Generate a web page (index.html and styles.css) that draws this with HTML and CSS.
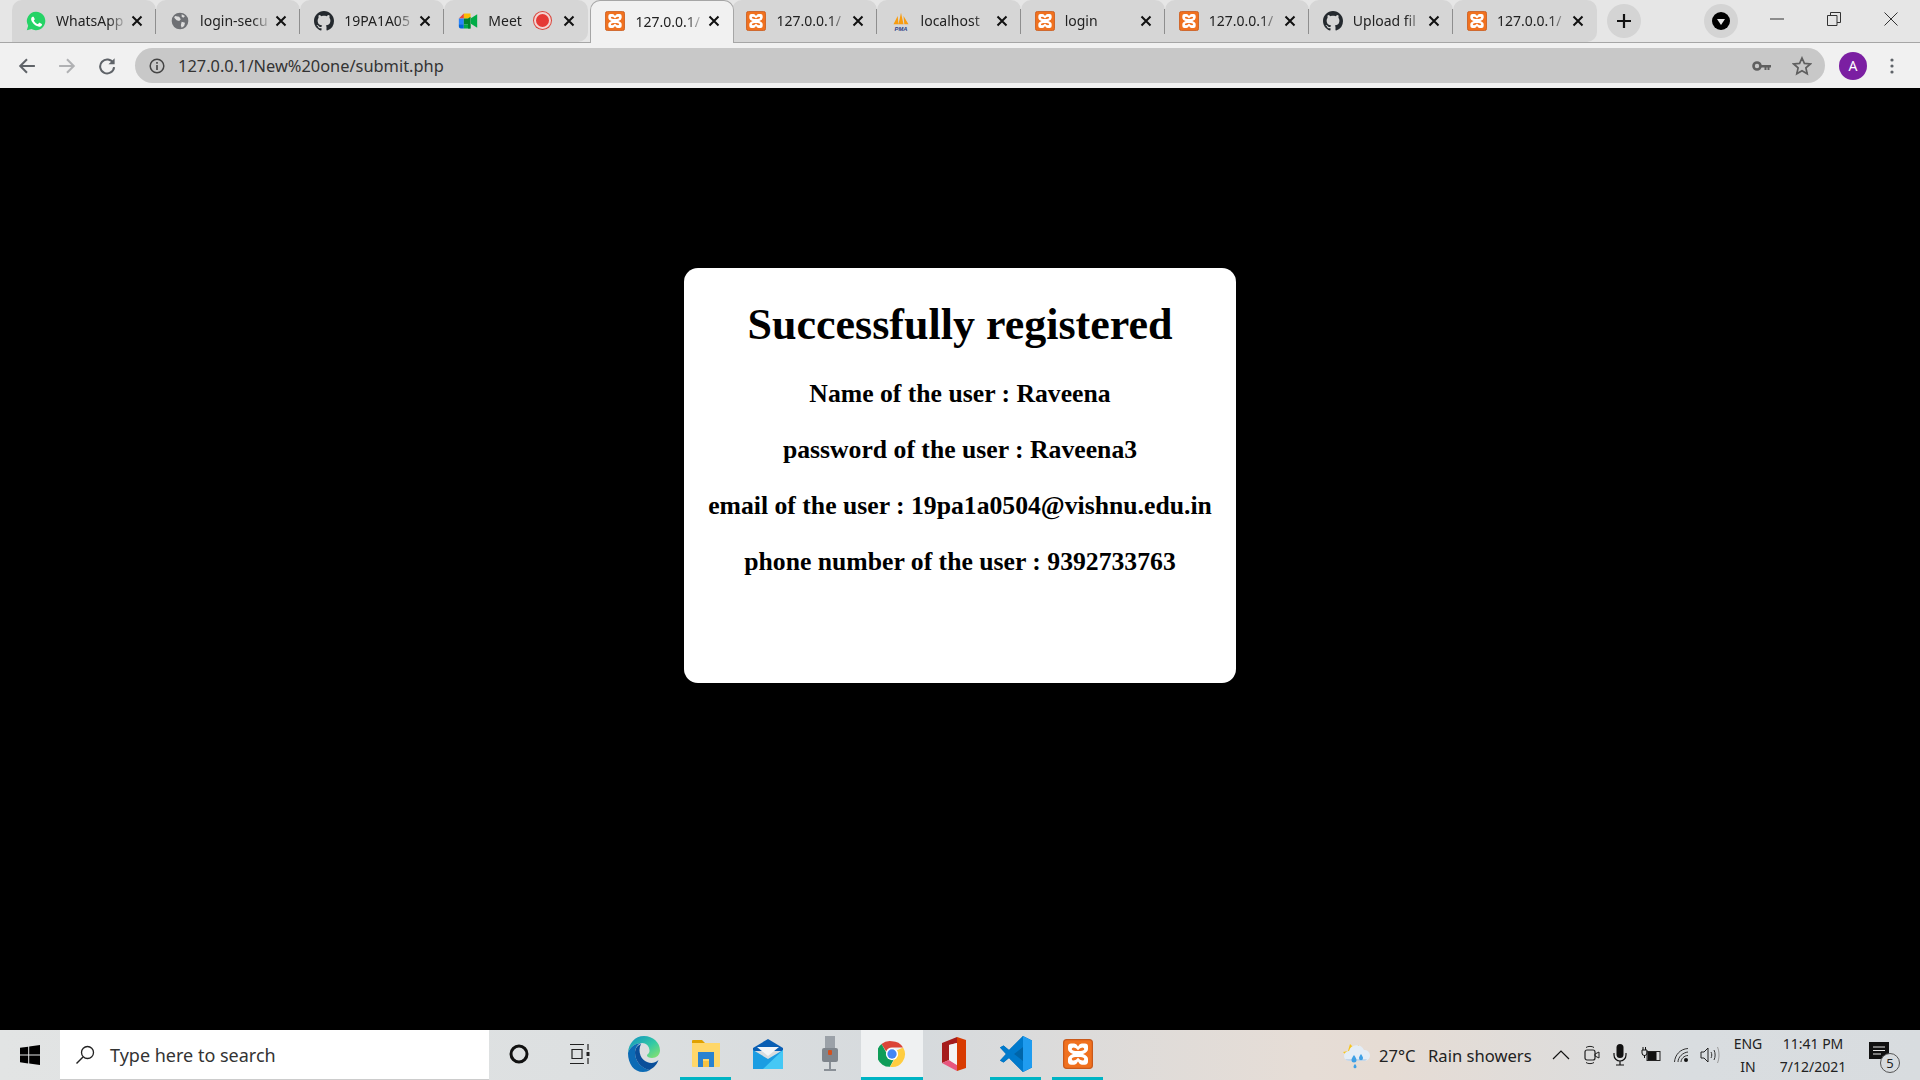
FILE: index.html
```html
<!DOCTYPE html>
<html lang="en">
<head>
<meta charset="utf-8">
<title>127.0.0.1/New%20one/submit.php</title>
<link rel="stylesheet" href="styles.css">
</head>
<body>
<svg class="defs" width="0" height="0" aria-hidden="true">
  <defs>
    <symbol id="xampp" viewBox="0 0 24 24">
      <rect x="0.5" y="0.5" width="23" height="23" rx="2.500" fill="#f0711f"/>
      <rect x="0.5" y="0.5" width="23" height="23" rx="2.500" fill="none" stroke="#c9591a"/>
      <path fill="#fff" fill-rule="evenodd" d="M4 6Q4 3.500 6.500 3.500H9Q10.800 3.500 12 6 13.200 3.500 15 3.500H17.500Q20 3.500 20 6V8Q20 10.500 16 12 20 13.500 20 16V18Q20 20.500 17.500 20.500H15Q13.200 20.500 12 18 10.800 20.500 9 20.500H6.500Q4 20.500 4 18V16Q4 13.500 8 12 4 10.500 4 8zM8.500 6.800Q7 6.800 7 8 7 9.200 10 9.600H14Q17 9.200 17 8 17 6.800 15.500 6.800 13.500 7 12 9 10.500 7 8.500 6.800zM10 14.400Q7 14.800 7 16 7 17.200 8.500 17.200 10.500 17 12 15 13.500 17 15.500 17.200 17 17.200 17 16 17 14.800 14 14.400z"/>
    </symbol>
    <symbol id="github" viewBox="0 0 16 16">
      <path fill="#24292e" d="M8 0C3.580 0 0 3.580 0 8c0 3.540 2.290 6.530 5.470 7.590.4.070.55-.17.55-.38 0-.19-.01-.82-.01-1.490-2.010.37-2.530-.49-2.690-.94-.09-.23-.48-.94-.82-1.130-.28-.15-.68-.52-.01-.53.63-.01 1.080.58 1.230.82.720 1.210 1.870.87 2.330.66.070-.52.280-.87.510-1.070-1.780-.2-3.640-.89-3.640-3.950 0-.87.310-1.590.820-2.150-.08-.2-.36-1.020.080-2.120 0 0 .67-.21 2.200.82.640-.18 1.320-.27 2-.27s1.360.09 2 .27c1.530-1.040 2.200-.82 2.200-.82.440 1.100.160 1.920.080 2.120.51.560.820 1.270.820 2.150 0 3.070-1.870 3.750-3.650 3.950.290.250.540.730.540 1.480 0 1.070-.01 1.930-.01 2.200 0 .21.150.46.550.38A8.010 8.010 0 0 0 16 8c0-4.420-3.580-8-8-8z"/>
    </symbol>
    <symbol id="close" viewBox="0 0 12 12">
      <path d="M1.500 1.500l9 9M10.500 1.500l-9 9" stroke="#111" stroke-width="2" fill="none"/>
    </symbol>
  </defs>
</svg>

<header class="chrome">
  <div class="tabstrip">
    <div class="tab">
      <svg class="fav" viewBox="0 0 24 24"><path fill="#25d366" d="M12 1a11 11 0 0 0-9.400 16.600L1 23l5.600-1.500A11 11 0 1 0 12 1z"/><path fill="#fff" d="M8.300 6.500c-.3 0-.8.100-1.200.6-.5.500-1.400 1.400-1.400 3.300s1.400 3.800 1.600 4c.2.300 2.700 4.300 6.700 5.800 3.300 1.300 4 .9 4.700.9s2.300-.9 2.600-1.900c.3-.9.300-1.700.2-1.900-.1-.2-.4-.3-.8-.5l-2.700-1.300c-.4-.1-.6-.2-.9.200l-1.200 1.500c-.2.300-.5.300-.8.100-.4-.2-1.700-.6-3.200-2-1.200-1-2-2.300-2.200-2.700-.2-.4 0-.6.200-.8l.6-.7c.2-.2.300-.4.400-.6.100-.3.100-.5 0-.7L9.700 7.200c-.3-.7-.6-.7-.9-.7z" transform="translate(1.500 1.500) scale(.82)"/></svg>
      <span class="title">WhatsApp</span>
      <svg class="close"><use href="#close"/></svg>
    </div>
    <div class="tab">
      <svg class="fav" viewBox="0 0 24 24"><circle cx="12" cy="12" r="10" fill="#6e7074"/><path fill="#dcdcdc" d="M6 6l5 1 2 3-2 2-3-1-3-3zM14 13l4 1-1 4-3 2-1-3zM14 4l4 2-2 2-2-1z"/></svg>
      <span class="title">login-secu</span>
      <svg class="close"><use href="#close"/></svg>
    </div>
    <div class="tab">
      <svg class="fav"><use href="#github"/></svg>
      <span class="title">19PA1A05</span>
      <svg class="close"><use href="#close"/></svg>
    </div>
    <div class="tab tab-before-active">
      <svg class="fav" viewBox="0 0 24 24"><path fill="#fbbc04" d="M7 3h8v6H7z"/><path fill="#ea4335" d="M7 3v6H1z"/><path fill="#2684fc" d="M1 9h6v7H1z"/><path fill="#0066da" d="M1 16h6v5H3.500A2.500 2.500 0 0 1 1 18.500z"/><path fill="#00ac47" d="M7 16h8v5H7z"/><path fill="#00832d" d="M15 7v14l-3 0V16H7V9h5l3-2z"/><path fill="#00ac47" d="M15 9l8-5v16l-8-5z"/></svg>
      <span class="title title-short">Meet</span>
      <span class="rec"></span>
      <svg class="close"><use href="#close"/></svg>
    </div>
    <div class="tab active">
      <svg class="fav"><use href="#xampp"/></svg>
      <span class="title">127.0.0.1/</span>
      <svg class="close"><use href="#close"/></svg>
    </div>
    <div class="tab">
      <svg class="fav"><use href="#xampp"/></svg>
      <span class="title">127.0.0.1/</span>
      <svg class="close"><use href="#close"/></svg>
    </div>
    <div class="tab">
      <svg class="fav" viewBox="0 0 24 24"><path fill="#f89c0e" d="M3 16L8 6l1 10zM9 16l3-14 3 14zM15 6l6 10h-5z"/><text x="12" y="23.500" class="pma">PMA</text></svg>
      <span class="title">localhost</span>
      <svg class="close"><use href="#close"/></svg>
    </div>
    <div class="tab">
      <svg class="fav"><use href="#xampp"/></svg>
      <span class="title">login</span>
      <svg class="close"><use href="#close"/></svg>
    </div>
    <div class="tab">
      <svg class="fav"><use href="#xampp"/></svg>
      <span class="title">127.0.0.1/</span>
      <svg class="close"><use href="#close"/></svg>
    </div>
    <div class="tab">
      <svg class="fav"><use href="#github"/></svg>
      <span class="title">Upload fil</span>
      <svg class="close"><use href="#close"/></svg>
    </div>
    <div class="tab">
      <svg class="fav"><use href="#xampp"/></svg>
      <span class="title">127.0.0.1/</span>
      <svg class="close"><use href="#close"/></svg>
    </div>
    <button class="newtab" aria-label="New tab">
      <svg width="16" height="16" viewBox="0 0 16 16"><path d="M8 1v14M1 8h14" stroke="#111" stroke-width="2.200"/></svg>
    </button>
    <div class="strip-space"></div>
    <button class="tabsearch" aria-label="Search tabs">
      <svg width="18" height="18" viewBox="0 0 18 18"><circle cx="9" cy="9" r="9" fill="#000"/><path d="M5 7h8l-4 6z" fill="#e6e6e6"/></svg>
    </button>
    <div class="winctl">
      <svg width="14" height="14" viewBox="0 0 14 14"><path d="M0 7h14" stroke="#333"/></svg>
    </div>
    <div class="winctl">
      <svg width="14" height="14" viewBox="0 0 14 14"><path d="M.5 3.500h9.500v10H.5zM3.500 3.500V.5h10v10H10" fill="none" stroke="#333"/></svg>
    </div>
    <div class="winctl">
      <svg width="14" height="14" viewBox="0 0 14 14"><path d="M.5.5l13 13M13.500.5l-13 13" stroke="#333"/></svg>
    </div>
  </div>

  <div class="toolbar">
    <svg class="nav" viewBox="0 0 16 16"><path d="M15 8H2M8 2L2 8l6 6" fill="none" stroke="#5f6368" stroke-width="1.800"/></svg>
    <svg class="nav" viewBox="0 0 16 16"><path d="M1 8h13M8 2l6 6-6 6" fill="none" stroke="#b0b1b3" stroke-width="1.800"/></svg>
    <svg class="nav" viewBox="0 0 16 16"><path d="M13.600 5.500A6.200 6.200 0 1 0 14.300 9" fill="none" stroke="#5f6368" stroke-width="1.800"/><path d="M14.800 1v5.500H9.300z" fill="#5f6368"/></svg>
    <div class="omnibox">
      <svg class="info" viewBox="0 0 16 16"><circle cx="8" cy="8" r="6.800" fill="none" stroke="#444" stroke-width="1.500"/><path d="M8 7v5M8 4v1.800" stroke="#444" stroke-width="1.600"/></svg>
      <span class="url">127.0.0.1/New%20one/submit.php</span>
      <svg class="key" viewBox="0 0 20 12"><circle cx="5" cy="6" r="3.500" fill="none" stroke="#5f5f5f" stroke-width="2.600"/><path d="M8 5h11v2.500h-1.500V10h-2V7.500h-1V10h-2V7.500H8z" fill="#5f5f5f"/></svg>
      <svg class="star" viewBox="0 0 20 20"><path d="M10 2l2.400 5.400 5.900.6-4.400 3.900 1.300 5.800L10 14.700l-5.200 3 1.300-5.800L1.700 8l5.900-.6z" fill="none" stroke="#5f5f5f" stroke-width="1.700"/></svg>
    </div>
    <div class="avatar">A</div>
    <svg class="dots" viewBox="0 0 4 16"><circle cx="2" cy="2" r="1.600" fill="#5f6368"/><circle cx="2" cy="8" r="1.600" fill="#5f6368"/><circle cx="2" cy="14" r="1.600" fill="#5f6368"/></svg>
  </div>
</header>

<main class="page">
  <section class="card">
    <h1 class="card-title">Successfully registered</h1>
    <h2 class="card-line">Name of the user : Raveena</h2>
    <h2 class="card-line">password of the user : Raveena3</h2>
    <h2 class="card-line">email of the user : 19pa1a0504@vishnu.edu.in</h2>
    <h2 class="card-line">phone number of the user : 9392733763</h2>
  </section>
</main>

<footer class="taskbar">
  <div class="start">
    <svg width="20" height="20" viewBox="0 0 20 20"><path fill="#000" d="M0 2.800l8.200-1.100v7.900H0zM9.200 1.500L20 0v9.600H9.200zM0 10.500h8.200v7.900L0 17.200zM9.200 10.500H20V20L9.200 18.500z"/></svg>
  </div>
  <div class="search">
    <svg width="20" height="20" viewBox="0 0 20 20"><circle cx="12.500" cy="7.500" r="6" fill="none" stroke="#222" stroke-width="1.300"/><path d="M8 12l-6.500 6.500" stroke="#222" stroke-width="1.500"/></svg>
    <span>Type here to search</span>
  </div>
  <div class="tb-slot cortana">
    <svg width="20" height="20" viewBox="0 0 20 20"><circle cx="10" cy="10" r="8" fill="none" stroke="#111" stroke-width="3"/></svg>
  </div>
  <div class="tb-slot taskview">
    <svg width="22" height="20" viewBox="0 0 22 20"><path d="M1 .5h14M1 19.500h14M3 5.500h10v9H3zM19 0v6M19 14v6" fill="none" stroke="#222" stroke-width="1.200"/><rect x="17.500" y="8" width="3" height="4" fill="#222"/></svg>
  </div>
  <div class="tb-slot app">
    <svg width="32" height="36" viewBox="0 0 32 36"><defs><linearGradient id="edgeA" x1="0" y1="0" x2="1" y2="1"><stop offset="0" stop-color="#0f8fc4"/><stop offset=".55" stop-color="#33c9a5"/><stop offset="1" stop-color="#8fe36a"/></linearGradient></defs><path fill="url(#edgeA)" d="M16 0c9 0 16 6.500 16 14.500 0 4.500-3.500 7.500-8 7.500-3 0-5-1-5-2.500 0-1.500 2.500-1.500 2.500-5C21.500 10 18 7 14 7 7.500 7 1.500 11 0 17 .5 7.500 7 0 16 0z"/><path fill="#0c6bb5" d="M0 17C1.500 11 7.500 7 14 7c-4.500 1-7 5-7 10 0 8 7 16 15 17-2 1-4 2-7 2C6 36 0 28 0 17z"/><path fill="#0a4f9a" d="M7 17c0-5 3-8 6-9-1 2-1.500 4-1.500 6 0 8 6 13 12 13 2 0 5-1 7-3-2 6-7 9-9 10C14 33 7 25 7 17z"/></svg>
  </div>
  <div class="tb-slot app running">
    <svg width="28" height="28" viewBox="0 0 28 28"><path fill="#e0a100" d="M0 1a1 1 0 0 1 1-1h9l3 3H0z"/><path fill="#ffd76a" d="M0 3h28v23a1 1 0 0 1-1 1H1a1 1 0 0 1-1-1z"/><path fill="#2a83d0" fill-rule="evenodd" d="M6 12h16v15h-5v-8h-6v8H6z"/><rect x="11" y="21" width="6" height="6" fill="#f5c242"/></svg>
  </div>
  <div class="tb-slot app">
    <svg width="30" height="30" viewBox="0 0 30 30"><path fill="#0a5fb4" d="M15 0l15 9v3H0V9z"/><path fill="#f4f6f8" d="M4 8h22l-11 9z"/><path fill="#1b9de2" d="M0 11l15 9 15-9v19H0z"/><path fill="#45c8f5" d="M30 11v19H10z"/></svg>
  </div>
  <div class="tb-slot app">
    <svg width="16" height="36" viewBox="0 0 16 36"><rect x="3" y="0" width="10" height="12" fill="#9ba1a8"/><rect x="0" y="12" width="16" height="14" rx="2" fill="#7f858c"/><rect x="6" y="14" width="4" height="5" rx="1" fill="#d2501e"/><rect x="7" y="26" width="2" height="7" fill="#8a9097"/><rect x="2" y="33" width="12" height="2" fill="#8a9097"/></svg>
  </div>
  <div class="tb-slot app running current">
    <svg width="28" height="28" viewBox="0 0 48 48"><path fill="#db4437" d="M24 2a22 22 0 0 1 19 11H24a11 11 0 0 0-10 6.500L6 7a22 22 0 0 1 18-5z"/><path fill="#0f9d58" d="M6 7l9.500 17a10 10 0 0 0 12 8.700L20.500 46A22 22 0 0 1 6 7z"/><path fill="#ffcd40" d="M43 13a22 22 0 0 1-22.500 33l8-13.400A10 10 0 0 0 32 18z"/><circle cx="24" cy="24" r="10.500" fill="#fff"/><circle cx="24" cy="24" r="8" fill="#4285f4"/></svg>
  </div>
  <div class="tb-slot app">
    <svg width="24" height="34" viewBox="0 0 24 34"><path fill="#a61c1c" d="M0 6L15 0v6L7 8v15l-7 3z"/><path fill="#d83b01" d="M15 0l9 3v28l-9 3z"/><path fill="#e8567e" d="M0 26l7-3 8 5v6z"/><path fill="#f4f4f4" d="M7 8l8-2v22l-8-5z"/></svg>
  </div>
  <div class="tb-slot app running">
    <svg width="32" height="36" viewBox="0 0 32 36"><path fill="#0065a9" d="M23 0l9 4.500v27L23 36 9 22 3.500 26.500 0 24.500 6 18 0 11.500l3.500-2L9 14z"/><path fill="#007acc" d="M23 0v11l-9 7 9 7v11L9 22 3.500 26.500 0 24.500 6 18 0 11.500l3.500-2L9 14z"/><path fill="#1f9cf0" d="M23 0l9 4.500v27L23 36z"/></svg>
  </div>
  <div class="tb-slot app running">
    <svg width="30" height="30"><use href="#xampp"/></svg>
  </div>

  <div class="tray">
    <svg class="weather" width="28" height="28" viewBox="0 0 28 28"><path fill="#f7c51a" d="M1 11l5-1 2-7 4 4 5-3-1 8-9 5z"/><path fill="#e4edf6" d="M7 20a5 5 0 0 1 0-10 8 8 0 0 1 15-1 5.500 5.500 0 0 1 1 11z"/><path fill="#c4d6e8" d="M7 20a5 5 0 0 1-4-2h22a5.500 5.500 0 0 1-2 2z"/><path fill="#3ea0e6" d="M12 14c1.600 2.400 2.500 3.700 2.500 5a2.500 2.500 0 0 1-5 0c0-1.300.9-2.600 2.500-5zM19 13c1.300 2 2 3 2 4.200a2 2 0 0 1-4 0c0-1.200.7-2.200 2-4.200zM13 23c1 1.300 1.500 2 1.500 2.800a1.500 1.500 0 0 1-3 0c0-.8.500-1.500 1.500-2.800z"/></svg>
    <span class="temp">27°C</span>
    <span class="cond">Rain showers</span>
    <svg class="chev" width="18" height="10" viewBox="0 0 18 10"><path d="M1 9l8-8 8 8" fill="none" stroke="#111" stroke-width="1.200"/></svg>
    <svg class="ti ti-meet" width="16" height="20" viewBox="0 0 16 20"><rect x="1" y="5" width="10" height="10" rx="2" fill="none" stroke="#222" stroke-width="1.200"/><path d="M11 9l4-2v6l-4-2zM2 2.500C4 1 8 1 10 2.500M2 17.500c2 1.500 6 1.500 8 0" fill="none" stroke="#222"/></svg>
    <svg class="ti ti-mic" width="14" height="22" viewBox="0 0 14 22"><rect x="3.500" y="0" width="7" height="14" rx="3.500" fill="#111"/><path d="M1 9v2a6 6 0 0 0 12 0V9M7 17v4M3 21h8" fill="none" stroke="#111" stroke-width="1.200"/></svg>
    <svg class="ti ti-batt" width="20" height="16" viewBox="0 0 20 16"><path d="M2 0v3M4.500 0v3M1 3h5v3a2.500 2.500 0 0 1-5 0zM3.500 8v3" fill="none" stroke="#111"/><rect x="6" y="4.500" width="13" height="9" fill="none" stroke="#222"/><rect x="6.500" y="5" width="9" height="8" fill="#111"/></svg>
    <svg class="ti ti-wifi" width="16" height="16" viewBox="0 0 16 16"><path d="M1.500 15C2 8 7 2 15 1.500M5 15C5 10 10 5.500 15 5M8 15c0-3 3-6.500 7-6.500" fill="none" stroke="#333"/><circle cx="13" cy="13" r="2" fill="#111"/></svg>
    <svg class="ti ti-vol" width="20" height="20" viewBox="0 0 20 20"><path d="M1 7h3l4-4v14l-4-4H1z" fill="none" stroke="#222"/><path d="M11 7c1 2 1 4 0 6M14 5c1.500 3 1.500 7 0 10" fill="none" stroke="#333"/><path d="M17.500 2c2 5 2 11 0 16" fill="none" stroke="#999"/></svg>
    <div class="lang"><span>ENG</span><span>IN</span></div>
    <div class="clock"><span>11:41 PM</span><span>7/12/2021</span></div>
    <div class="notif">
      <svg width="20" height="20" viewBox="0 0 20 20"><path d="M0 0h20v17H0z" fill="#111"/><path d="M4 5h12M4 8.500h12M4 12h8" stroke="#e5e5e5" stroke-width="1.200"/></svg>
      <span class="badge">5</span>
    </div>
  </div>
</footer>
</body>
</html>
```

FILE: styles.css
```css
* { box-sizing: border-box; }
html, body { margin: 0; height: 100%; }
body {
  display: flex;
  flex-direction: column;
  height: 100vh;
  overflow: hidden;
  background: #000;
  font-family: "Noto Sans", "Open Sans", sans-serif;
}
.defs { display: block; height: 0; }

.chrome { height: 88px; flex: none; display: flex; flex-direction: column; }

.tabstrip {
  height: 43px;
  flex: none;
  display: flex;
  align-items: stretch;
  padding-left: 12px;
  background: #e6e6e6;
  border-bottom: 1px solid #a6a6a6;
}
.tab {
  width: 144.1px;
  flex: none;
  display: flex;
  align-items: center;
  padding: 0 13px 1px 14px;
  background: #d6d6d6;
  border-radius: 10px 10px 0 0;
  position: relative;
}
.tab::after {
  content: "";
  position: absolute;
  right: 0;
  top: 9px;
  height: 25px;
  width: 1px;
  background: #8e8e8e;
}
.tab:nth-child(4)::after, .tab:nth-child(5)::after, .tab:nth-child(11)::after { display: none; }
.tab-before-active, .tab:nth-child(11) { border-bottom-right-radius: 10px; }
.tab.active {
  background: #f1f1f1;
  border: 1px solid #a6a6a6;
  border-bottom: 0;
  margin-bottom: -1px;
  margin-left: 2px;
  margin-right: -2px;
  padding-bottom: 2px;
  z-index: 2;
}
.fav { width: 20px; height: 20px; flex: none; }
.pma { font: italic bold 7px "Liberation Sans", sans-serif; fill: #2c3f86; text-anchor: middle; }
.title {
  flex: 1;
  min-width: 0;
  margin-left: 10px;
  font-size: 14px;
  color: #222;
  white-space: nowrap;
  -webkit-mask-image: linear-gradient(to right, #000 78%, rgba(0,0,0,.25) 100%);
  mask-image: linear-gradient(to right, #000 78%, rgba(0,0,0,.25) 100%);
}
.title-short { flex: 1; }
.rec {
  width: 17px;
  height: 17px;
  flex: none;
  margin-right: 4px;
  border-radius: 50%;
  background: #e53935;
  border: 2px solid #f3d4d2;
  box-shadow: 0 0 0 1px #d9453c;
}
.close { width: 12px; height: 12px; flex: none; margin-left: 8px; }

.newtab, .tabsearch {
  border: 0;
  padding: 0;
  border-radius: 50%;
  background: #d4d4d4;
  display: flex;
  align-items: center;
  justify-content: center;
  align-self: center;
  flex: none;
}
.newtab { width: 34px; height: 34px; margin-left: 10px; }
.strip-space { flex: 1; }
.tabsearch { width: 34px; height: 34px; margin-right: 11px; }
.winctl { width: 57px; display: flex; align-items: center; justify-content: center; padding: 0 1px 4px 0; }

.toolbar {
  flex: 1;
  display: flex;
  align-items: center;
  background: #f1f1f1;
  padding: 0 26px 0 18px;
}
.nav { width: 18px; height: 18px; flex: none; margin-right: 22px; }
.omnibox {
  flex: 1;
  height: 35px;
  margin-left: -3px;
  border-radius: 18px;
  background: #c8c8c8;
  display: flex;
  align-items: center;
  padding: 0 13px 0 14px;
}
.info { width: 16px; height: 16px; flex: none; }
.url { flex: 1; margin-left: 13px; font-size: 16.400px; color: #333; white-space: nowrap; }
.key { width: 20px; height: 12px; flex: none; margin-right: 20px; }
.star { width: 20px; height: 20px; flex: none; }
.avatar {
  width: 28px;
  height: 28px;
  flex: none;
  margin-left: 14px;
  border-radius: 50%;
  background: #7b1fa2;
  color: #fff;
  font-size: 14px;
  display: flex;
  align-items: center;
  justify-content: center;
}
.dots { width: 4px; height: 16px; flex: none; margin-left: 23px; }

.page {
  flex: 1;
  min-height: 0;
  background: #000;
  display: flex;
  justify-content: center;
  align-items: flex-start;
  padding-top: 180px;
}
.card {
  width: 552px;
  height: 415px;
  background: #fff;
  border-radius: 14px;
  padding-top: 31px;
  text-align: center;
  color: #000;
  font-family: "Liberation Serif", "Times New Roman", serif;
}
.card-title { margin: 0 0 29px; font-size: 44px; line-height: 52px; font-weight: 700; }
.card-line { margin: 0 0 28px; font-size: 25.700px; line-height: 28px; font-weight: 700; }

.taskbar {
  height: 50px;
  flex: none;
  display: flex;
  align-items: stretch;
  background: linear-gradient(to right, #e2e4e4 0%, #dde0e1 30%, #d6dadd 48%, #e6ddd6 68%, #e6dcd4 72%, #d9dde0 88%, #d8dcdf 100%);
}
.start { width: 60px; flex: none; display: flex; align-items: center; justify-content: center; }
.search {
  width: 429px;
  flex: none;
  background: #fff;
  border-bottom: 1px solid #ccc;
  display: flex;
  align-items: center;
  padding-left: 15px;
  gap: 15px;
  font-size: 18px;
  color: #333;
}
.tb-slot { width: 62px; flex: none; display: flex; align-items: center; justify-content: center; position: relative; padding-bottom: 2px; }
.cortana { width: 59.500px; }
.taskview { width: 62px; margin-right: 2px; }
.app { width: 62px; }
.running::after {
  content: "";
  position: absolute;
  left: 5px;
  right: 6px;
  bottom: 0;
  height: 3px;
  background: #00b4c4;
}
.current { background: #eff1f2; }
.current::after { left: 0; right: 0; }

.tray { flex: 1; display: flex; align-items: center; justify-content: flex-start; padding-left: 233px; color: #222; font-size: 16.600px; }
.weather { flex: none; margin-right: 9.500px; }
.temp { width: 49px; flex: none; }
.cond { width: 124px; flex: none; white-space: nowrap; }
.chev { flex: none; margin-right: 14px; }
.ti { flex: none; }
.ti-meet { margin-right: 13px; }
.ti-mic { margin-right: 14px; }
.ti-batt { margin-right: 12px; }
.ti-wifi { margin-right: 11px; }
.ti-vol { margin-right: 8px; }
.lang, .clock { display: flex; flex-direction: column; align-items: center; gap: 3px; font-size: 14px; line-height: 20px; flex: none; }
.lang { width: 40px; }
.clock { width: 80px; margin-left: 5px; }
.notif { width: 30px; height: 30px; margin-left: 16px; position: relative; flex: none; padding-top: 2px; }
.badge {
  position: absolute;
  right: -1px;
  bottom: -3px;
  width: 20px;
  height: 20px;
  border-radius: 50%;
  background: #d8dcdf;
  border: 1px solid #555;
  font-size: 13px;
  line-height: 18px;
  text-align: center;
  color: #222;
}
```
